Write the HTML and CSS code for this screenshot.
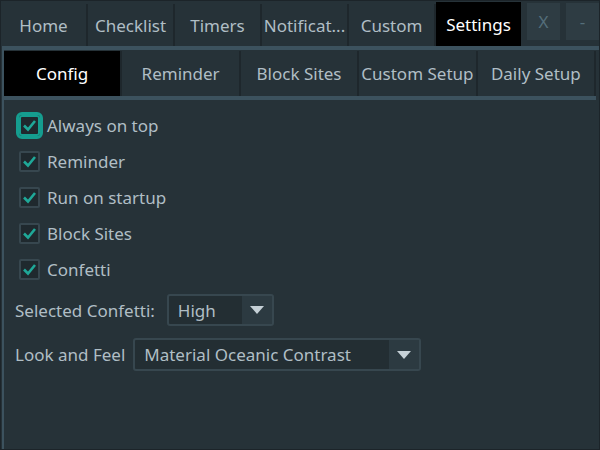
FILE: index.html
```html
<!DOCTYPE html>
<html>
<head>
<meta charset="utf-8">
<link rel="stylesheet" href="styles.css">
</head>
<body>
<div class="window">
  <div class="topbar">
    <div class="tabs">
      <div class="tab">Home</div>
      <div class="tab">Checklist</div>
      <div class="tab">Timers</div>
      <div class="tab">Notificat...</div>
      <div class="tab">Custom</div>
      <div class="tab active">Settings</div>
    </div>
    <div class="winbtn">X</div>
    <div class="winbtn">-</div>
  </div>
  <div class="panel">
    <div class="subtabs">
      <div class="subtab active">Config</div>
      <div class="subtab">Reminder</div>
      <div class="subtab">Block Sites</div>
      <div class="subtab">Custom Setup</div>
      <div class="subtab">Daily Setup</div>
    </div>
    <div class="content">
      <div class="checks">
        <label class="check focused"><span class="box"><svg viewBox="0 0 21 21" width="21" height="21"><path d="M5 10.5 L9 14.5 L16 6" fill="none" stroke="#1fa898" stroke-width="2.6"/></svg></span><span class="label">Always on top</span></label>
        <label class="check"><span class="box"><svg viewBox="0 0 21 21" width="21" height="21"><path d="M5 10.5 L9 14.5 L16 6" fill="none" stroke="#1fa898" stroke-width="2.6"/></svg></span><span class="label">Reminder</span></label>
        <label class="check"><span class="box"><svg viewBox="0 0 21 21" width="21" height="21"><path d="M5 10.5 L9 14.5 L16 6" fill="none" stroke="#1fa898" stroke-width="2.6"/></svg></span><span class="label">Run on startup</span></label>
        <label class="check"><span class="box"><svg viewBox="0 0 21 21" width="21" height="21"><path d="M5 10.5 L9 14.5 L16 6" fill="none" stroke="#1fa898" stroke-width="2.6"/></svg></span><span class="label">Block Sites</span></label>
        <label class="check"><span class="box"><svg viewBox="0 0 21 21" width="21" height="21"><path d="M5 10.5 L9 14.5 L16 6" fill="none" stroke="#1fa898" stroke-width="2.6"/></svg></span><span class="label">Confetti</span></label>
      </div>
      <div class="row row-confetti">
        <span class="label">Selected Confetti:</span>
        <div class="combo combo-small">
          <span class="value">High</span>
          <span class="arrow"><svg viewBox="0 0 14 8" width="14" height="8"><path d="M0 0 H14 L7 8 Z" fill="#c5d0d6"/></svg></span>
        </div>
      </div>
      <div class="row row-laf">
        <span class="label">Look and Feel</span>
        <div class="combo combo-wide">
          <span class="value">Material Oceanic Contrast</span>
          <span class="arrow"><svg viewBox="0 0 14 8" width="14" height="8"><path d="M0 0 H14 L7 8 Z" fill="#c5d0d6"/></svg></span>
        </div>
      </div>
    </div>
  </div>
</div>
</body>
</html>
```
FILE: styles.css
```css
* { box-sizing: border-box; }
html, body { margin: 0; padding: 0; background: #263238; }
body {
  font-family: "Noto Sans", "Open Sans", sans-serif;
  font-size: 17px;
  color: #b0bec5;
}
.window {
  width: 600px;
  height: 450px;
  background: #263238;
  border: 1px solid #1c2429;
  display: flex;
  flex-direction: column;
  overflow: hidden;
}
.topbar {
  height: 45px;
  display: flex;
  align-items: flex-start;
  flex: none;
}
.tabs {
  width: 520px;
  display: flex;
  height: 44px;
  margin-top: 1px;
}
.tab {
  flex: 1;
  display: flex;
  align-items: center;
  justify-content: center;
  border-right: 2px solid #1e272c;
  margin: 2px 0 0;
  white-space: nowrap;
}
.tab.active {
  background: #000;
  color: #fff;
  border-right: none;
  margin-top: 0;
}
.winbtn {
  width: 33px;
  height: 37px;
  margin: 2px 0 0 6px;
  background: #2e3c43;
  color: #546e7a;
  display: flex;
  align-items: center;
  justify-content: center;
  font-size: 17px;
}
.panel {
  flex: 1;
  border-top: 4px solid #3c525e;
  border-left: 2px solid #3c525e;
  margin-left: 1px;
  display: flex;
  flex-direction: column;
}
.subtabs {
  height: 50px;
  display: flex;
  width: 592px;
  border-bottom: 4px solid #3c525e;
  flex: none;
  padding-top: 1px;
}
.subtab {
  flex: 1;
  display: flex;
  align-items: center;
  justify-content: center;
  border-right: 2px solid #1e272c;
  white-space: nowrap;
}
.subtab.active {
  background: #000;
  color: #fff;
}
.content {
  padding: 15px 0 0 11px;
}
.checks {
  display: flex;
  flex-direction: column;
  gap: 15px;
}
.check {
  display: flex;
  align-items: center;
  height: 21px;
  padding-left: 4px;
}
.box {
  width: 21px;
  height: 21px;
  border: 2px solid #37474f;
  border-radius: 2px;
  background: #1f292e;
  display: flex;
  align-items: center;
  justify-content: center;
  margin-right: 7px;
}
.box svg { flex: none; }
.check.focused .box {
  border-color: #159d8f;
  outline: 3px solid #159d8f;
  outline-offset: 0;
  border-radius: 3px;
}
.row {
  display: flex;
  align-items: center;
}
.row-confetti { margin-top: 14px; gap: 12px; }
.row-laf { margin-top: 12px; gap: 8px; }
.combo {
  display: flex;
  border: 2px solid #37474f;
  border-radius: 3px;
  background: #232e33;
  height: 32px;
  align-items: stretch;
}
.combo .value {
  flex: 1;
  display: flex;
  align-items: center;
  padding-left: 9px;
}
.combo .arrow {
  width: 30px;
  background: #2c3a41;
  display: flex;
  align-items: center;
  justify-content: center;
}
.combo-small { width: 107px; }
.combo-wide { width: 288px; height: 33px; }
```
